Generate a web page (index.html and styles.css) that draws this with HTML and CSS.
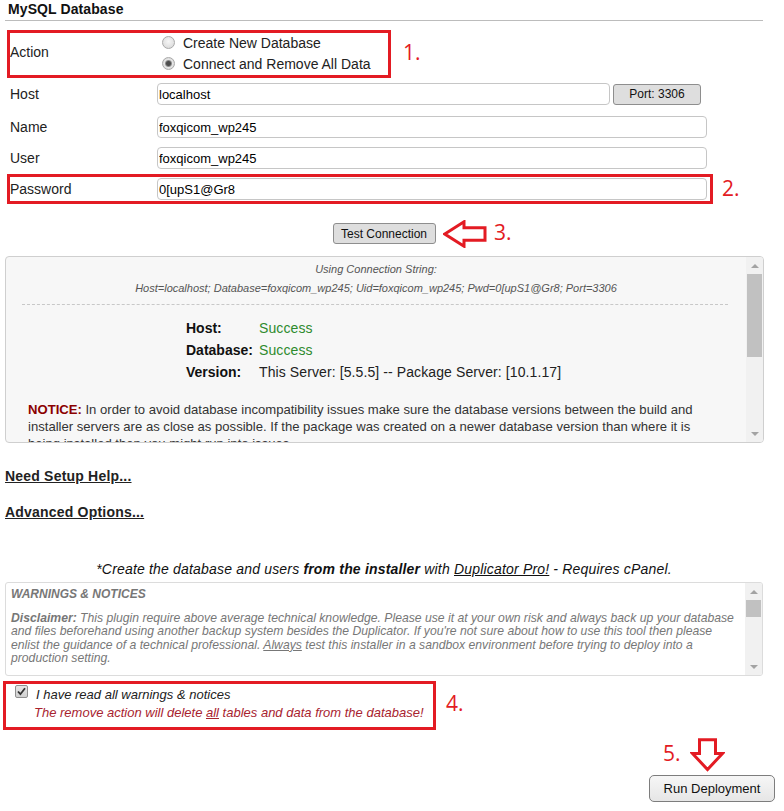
FILE: index.html
```html
<!DOCTYPE html>
<html lang="en">
<head>
<meta charset="utf-8">
<title>MySQL Database</title>
<link rel="stylesheet" href="styles.css">
</head>
<body>
<div class="page">
  <h1 class="title">MySQL Database</h1>

  <div class="annot-box action-box">
    <div class="label action-label">Action</div>
    <div class="radios">
      <div class="radio-line"><span class="radio"></span>Create New Database</div>
      <div class="radio-line"><span class="radio checked"></span>Connect and Remove All Data</div>
    </div>
    <span class="annot annot-1">1.</span>
  </div>

  <div class="row row-host">
    <div class="label">Host</div>
    <input class="text w-host" type="text" value="localhost">
    <button class="btn port-btn" type="button">Port: 3306</button>
  </div>
  <div class="row row-name">
    <div class="label">Name</div>
    <input class="text w-full" type="text" value="foxqicom_wp245">
  </div>
  <div class="row row-user">
    <div class="label">User</div>
    <input class="text w-full" type="text" value="foxqicom_wp245">
  </div>
  <div class="annot-box pass-box">
    <div class="label">Password</div>
    <input class="text w-full" type="text" value="0[upS1@Gr8">
    <span class="annot annot-2">2.</span>
  </div>

  <div class="test-row">
    <button class="btn test-btn" type="button">Test Connection</button>
    <svg class="arrow-left" width="44" height="28" viewBox="0 0 44 28"><path d="M1.8 14 L21 1.8 L21 7.8 L42 7.8 L42 20.2 L21 20.2 L21 26.2 Z" fill="#fff" stroke="#e31b23" stroke-width="3" stroke-linejoin="miter"/></svg>
    <span class="annot annot-3">3.</span>
  </div>

  <div class="conn-box">
    <div class="conn-content">
      <div class="cs">Using Connection String:</div>
      <div class="cs">Host=localhost; Database=foxqicom_wp245; Uid=foxqicom_wp245; Pwd=0[upS1@Gr8; Port=3306</div>
      <div class="dash"></div>
      <table class="result">
        <tr><th>Host:</th><td class="ok">Success</td></tr>
        <tr><th>Database:</th><td class="ok">Success</td></tr>
        <tr><th>Version:</th><td>This Server: [5.5.5] -- Package Server: [10.1.17]</td></tr>
      </table>
      <div class="notice"><b>NOTICE:</b> In order to avoid database incompatibility issues make sure the database versions between the build and installer servers are as close as possible. If the package was created on a newer database version than where it is being installed then you might run into issues.</div>
    </div>
    <div class="sb">
      <div class="sb-btn"><span class="tri-up"></span></div>
      <div class="sb-thumb thumb-conn"></div>
      <div class="sb-space"></div>
      <div class="sb-btn"><span class="tri-down"></span></div>
    </div>
  </div>

  <div class="link-line link1"><a class="link" href="#">Need Setup Help...</a></div>
  <div class="link-line link2"><a class="link" href="#">Advanced Options...</a></div>

  <div class="create-note">*Create the database and users <b>from the installer</b> with <a class="plain-link" href="#">Duplicator Pro!</a> - Requires cPanel.</div>

  <div class="warn-box">
    <div class="warn-content">
      <div class="warn-title">WARNINGS &amp; NOTICES</div>
      <div class="warn-text"><b>Disclaimer:</b> This plugin require above average technical knowledge. Please use it at your own risk and always back up your database and files beforehand using another backup system besides the Duplicator. If you're not sure about how to use this tool then please enlist the guidance of a technical professional. <u>Always</u> test this installer in a sandbox environment before trying to deploy into a production setting.</div>
    </div>
    <div class="sb">
      <div class="sb-btn"><span class="tri-up"></span></div>
      <div class="sb-thumb thumb-warn"></div>
      <div class="sb-space"></div>
      <div class="sb-btn"><span class="tri-down"></span></div>
    </div>
  </div>

  <div class="annot-box confirm-box">
    <div class="confirm-line1">
      <span class="check"><svg width="13" height="13" viewBox="0 0 13 13"><path d="M3 6.5 L5.4 9.2 L10 3.2" fill="none" stroke="#333" stroke-width="1.8"/></svg></span>
      <span>I have read all warnings &amp; notices</span>
    </div>
    <div class="confirm-line2">The remove action will delete <u>all</u> tables and data from the database!</div>
    <span class="annot annot-4">4.</span>
  </div>
</div>

<div class="footer">
  <span class="annot annot-5">5.</span>
  <svg class="arrow-down" width="35" height="34" viewBox="0 0 35 34"><path d="M9.5 1.8 L25.5 1.8 L25.5 15.5 L32.5 15.5 L17.5 31.5 L2.5 15.5 L9.5 15.5 Z" fill="#fff" stroke="#e31b23" stroke-width="3" stroke-linejoin="miter"/></svg>
  <button class="btn run-btn" type="button">Run Deployment</button>
</div>
</body>
</html>
```

FILE: styles.css
```css
html, body {
  margin: 0;
  padding: 0;
  background: #fff;
}
body {
  font-family: "Liberation Sans", Arial, sans-serif;
  color: #222;
  overflow: hidden;
}
.page {
  margin-left: 5px;
  width: 758px;
}
.title {
  margin: 0;
  font-size: 14px;
  line-height: 16px;
  font-weight: bold;
  color: #111;
  padding: 1px 0 3px 3px;
  border-bottom: 1px solid #bcbcbc;
  letter-spacing: 0.1px;
}

/* annotations */
.annot-box {
  border: 3px solid #e31b23;
  box-sizing: border-box;
  position: relative;
}
.annot {
  position: absolute;
  font-family: "Open Sans", "Noto Sans", sans-serif;
  font-size: 21px;
  line-height: 24px;
  color: #e31b23;
  white-space: nowrap;
}
.annot-1 { left: 393px; top: 7px; }
.annot-2 { left: 712px; top: -1px; }
.annot-3 { left: 489px; top: -3px; }
.annot-4 { left: 440px; top: 7px; }
.annot-5 { left: 663px; top: -34px; }

.label {
  width: 147px;
  flex: none;
  font-size: 14px;
  color: #222;
}

/* action */
.action-box {
  margin: 9px 0 0 2px;
  width: 384px;
  height: 48px;
  display: flex;
}
.action-label {
  align-self: center;
  margin-bottom: 4px;
  line-height: 17px;
}
.radios {
  display: flex;
  flex-direction: column;
  margin-top: -1px;
}
.radio-line {
  height: 21px;
  display: flex;
  align-items: center;
  font-size: 14px;
  color: #222;
}
.radio {
  width: 13px;
  height: 13px;
  box-sizing: border-box;
  border-radius: 50%;
  border: 1px solid #a9a9a9;
  background: radial-gradient(circle at 50% 40%, #f6f6f6 0, #e2e2e2 60%, #d4d4d4 100%);
  margin: 0 8px 0 5px;
  flex: none;
}
.radio.checked {
  background: radial-gradient(circle, #4d4d4d 0, #4d4d4d 2px, #8d8d8d 3px, #e6e6e6 4px, #d6d6d6 6.5px);
}

/* rows */
.row {
  display: flex;
  align-items: center;
  height: 24px;
  padding-left: 5px;
}
.row-host { margin-top: 4px; }
.row-name { margin-top: 9px; }
.row-user { margin-top: 7px; }
.text {
  height: 22px;
  box-sizing: border-box;
  border: 1px solid #c6c6c6;
  border-radius: 4px;
  font-family: "Liberation Sans", Arial, sans-serif;
  font-size: 13px;
  color: #000;
  padding: 0 0 0 1px;
  margin: 0;
  background: #fff;
  outline: none;
}
.w-host { width: 453px; }
.w-full { width: 550px; }

.btn {
  font-family: "Liberation Sans", Arial, sans-serif;
  background: #dedede;
  border: 1px solid #8e8e8e;
  border-radius: 3px;
  color: #111;
  padding: 0;
  margin: 0;
  box-sizing: border-box;
}
.port-btn {
  margin-left: 3px;
  width: 88px;
  height: 21px;
  font-size: 12px;
}
.pass-box {
  margin: 4px 0 0 2px;
  width: 706px;
  height: 30px;
  display: flex;
  align-items: center;
}

/* test connection */
.test-row {
  margin-top: 19px;
  height: 21px;
  text-align: center;
  position: relative;
}
.test-btn {
  width: 103px;
  height: 21px;
  font-size: 12px;
  vertical-align: top;
}
.arrow-left {
  position: absolute;
  left: 438px;
  top: -3px;
}

/* connection result box */
.conn-box {
  margin-top: 12px;
  width: 759px;
  height: 187px;
  box-sizing: border-box;
  border: 1px solid #cfcfcf;
  border-radius: 4px;
  background: #f7f7f7;
  display: flex;
  overflow: hidden;
}
.conn-content {
  flex: 1;
  overflow: hidden;
  padding-top: 3px;
}
.cs {
  font-size: 11px;
  font-style: italic;
  color: #555;
  line-height: 19px;
  text-align: center;
}
.dash {
  border-top: 1px dashed #c8c8c8;
  margin: 6px 18px 0 16px;
}
.result {
  margin: 12px 0 0 180px;
  border-collapse: collapse;
  font-size: 14px;
  color: #222;
}
.result th {
  text-align: left;
  font-weight: bold;
  padding: 0;
  width: 73px;
  height: 22px;
  color: #111;
}
.result td {
  padding: 0;
  height: 22px;
  letter-spacing: 0.1px;
}
.ok { color: #2e8b2e; }
.notice {
  margin-top: 18px;
  padding: 0 30px 0 22px;
  font-size: 13.1px;
  line-height: 17px;
  color: #333;
}
.notice b { color: #8b0000; }

/* fake scrollbars */
.sb {
  width: 17px;
  flex: none;
  background: #f1f1f1;
  display: flex;
  flex-direction: column;
}
.sb-btn {
  height: 17px;
  flex: none;
  display: flex;
  align-items: center;
  justify-content: center;
}
.tri-up {
  width: 0;
  height: 0;
  border-left: 4px solid transparent;
  border-right: 4px solid transparent;
  border-bottom: 4px solid #a3a3a3;
}
.tri-down {
  width: 0;
  height: 0;
  border-left: 4px solid transparent;
  border-right: 4px solid transparent;
  border-top: 4px solid #a3a3a3;
}
.sb-thumb {
  margin: 0 1px;
  background: #c1c1c1;
  flex: none;
}
.thumb-conn { height: 83px; }
.thumb-warn { height: 17px; }
.sb-space { flex: 1; }

/* links */
.link-line {
  line-height: 18px;
}
.link {
  font-size: 14px;
  font-weight: bold;
  color: #222;
  text-decoration: underline;
  letter-spacing: 0.2px;
}
.link1 { margin-top: 24px; }
.link2 { margin-top: 18px; }

.create-note {
  margin-top: 39px;
  text-align: center;
  font-style: italic;
  font-size: 14px;
  letter-spacing: 0.18px;
  line-height: 18px;
  color: #111;
}
.plain-link {
  color: #111;
  text-decoration: underline;
}

/* warnings */
.warn-box {
  margin-top: 4px;
  width: 758px;
  height: 94px;
  box-sizing: border-box;
  border: 1px solid #dcdcdc;
  border-radius: 3px;
  background: #fff;
  display: flex;
  overflow: hidden;
}
.warn-content {
  flex: 1;
  padding: 4px 8px 0 5px;
  color: #777;
  font-size: 12px;
  font-style: italic;
  overflow: hidden;
}
.warn-title {
  font-weight: bold;
  line-height: 14px;
}
.warn-text {
  margin-top: 11px;
  line-height: 13.4px;
  font-size: 12.2px;
}

/* confirm */
.confirm-box {
  margin: 5px 0 0 -2px;
  width: 433px;
  height: 49px;
  padding: 2px 0 0 9px;
}
.confirm-line1 {
  display: flex;
  align-items: flex-start;
  line-height: 18px;
  font-style: italic;
  font-size: 13px;
  color: #222;
}
.check {
  width: 13px;
  height: 13px;
  box-sizing: border-box;
  flex: none;
  margin: -1px 8px 0 0;
  border: 1px solid #8f8f8f;
  border-radius: 2px;
  background: linear-gradient(#e6e6e6, #d0d0d0);
  display: flex;
  align-items: center;
  justify-content: center;
  overflow: hidden;
}
.check svg { flex: none; }
.confirm-line2 {
  padding-left: 19px;
  font-style: italic;
  font-size: 13px;
  line-height: 18px;
  color: #a8232f;
}

/* footer */
.footer {
  position: relative;
  margin-top: 45px;
  display: flex;
  justify-content: flex-end;
  padding-right: 9px;
}
.arrow-down {
  position: absolute;
  left: 690px;
  top: -37px;
}
.run-btn {
  width: 126px;
  height: 27px;
  font-size: 13px;
  background: linear-gradient(#f6f6f6, #e6e6e6);
  border: 1px solid #7d7d7d;
  border-radius: 5px;
}
```
